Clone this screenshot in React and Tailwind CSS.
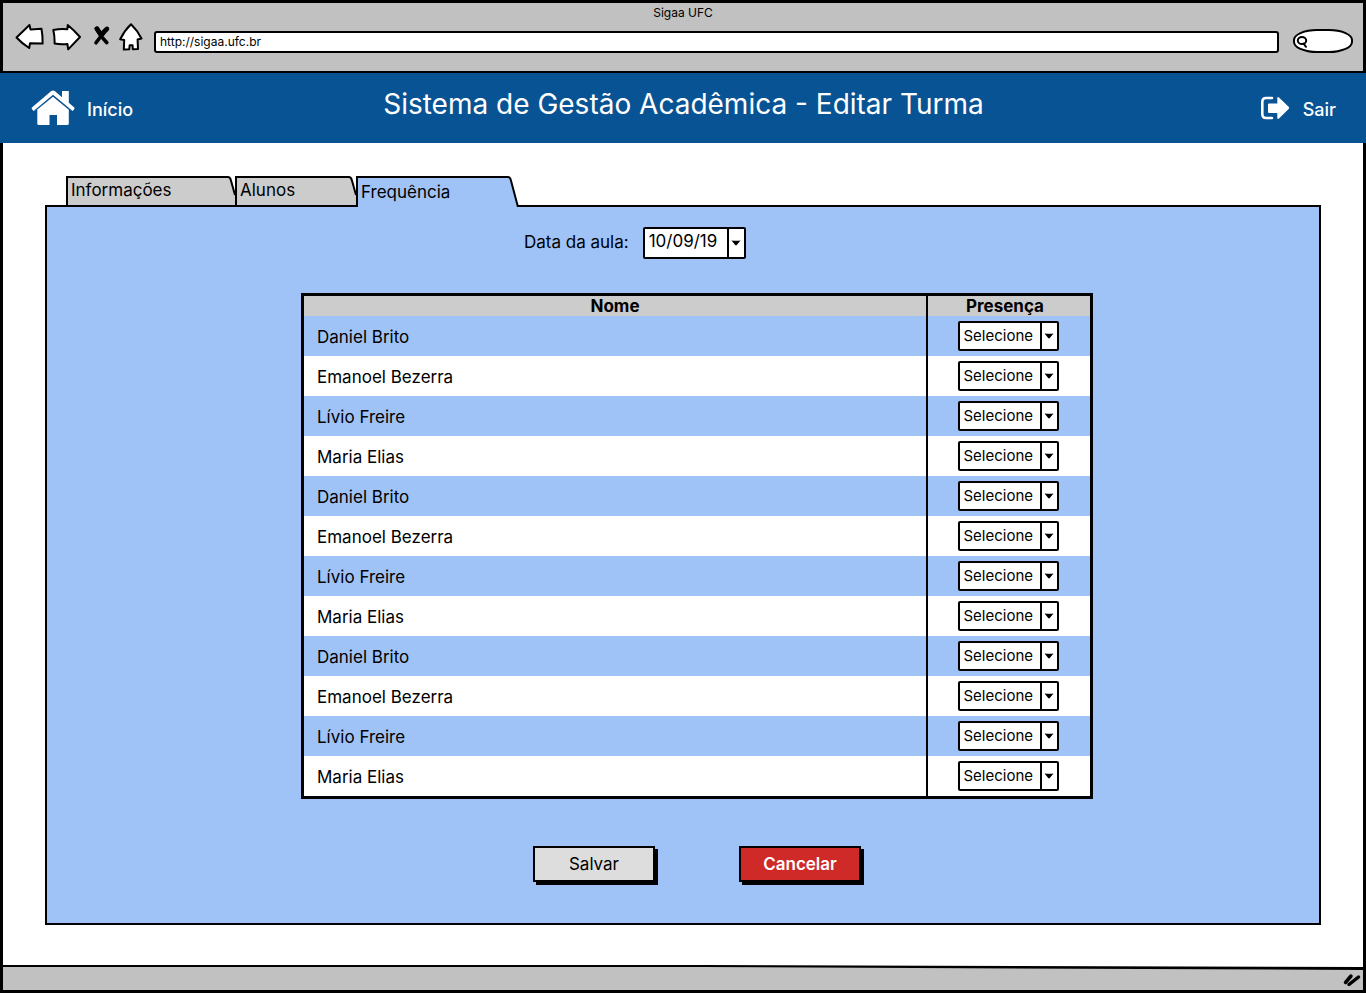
import React from "react";

const students = [
  "Daniel Brito", "Emanoel Bezerra", "Lívio Freire", "Maria Elias",
  "Daniel Brito", "Emanoel Bezerra", "Lívio Freire", "Maria Elias",
  "Daniel Brito", "Emanoel Bezerra", "Lívio Freire", "Maria Elias",
];

const sketch = { fill: "#fff", stroke: "#000", strokeWidth: 2, strokeLinejoin: "round", strokeLinecap: "round" };

function BrowserBar() {
  return (
    <div className="h-[73px] border-x-[3px] border-t-[3px] border-b-2 border-black bg-[#c1c1c1]">
      <p className="text-center text-xs leading-5">Sigaa UFC</p>
      <div className="flex h-[30px] items-end pr-[10px] pl-3">
        <div className="flex self-start">
          <button aria-label="Voltar" className="mr-2">
            <svg width="29" height="28" viewBox="0 0 29 28" {...sketch}>
              <path d="M1.5 14.5 14.5 2 15.5 6.5 26.5 5.8 Q27.8 13 27.6 20.6 L15 20.3 14.2 25 Q7 20.5 1.5 14.5Z" />
            </svg>
          </button>
          <button aria-label="Avançar" className="mr-3">
            <svg width="29" height="28" viewBox="0 0 29 28" {...sketch}>
              <path d="M1.3 7 Q8 5.4 15.4 6.2 L15.7 2 Q22.4 7.5 28 14 L16.2 26.4 15.4 21 Q8.5 21.6 2.6 20.6 Q2.8 13 1.3 7Z" />
            </svg>
          </button>
          <button aria-label="Parar" className="mr-2">
            <svg width="18" height="28" viewBox="0 0 18 28" fill="none" stroke="#000" strokeLinecap="round">
              <path d="M3.2 5.5 Q7 13 13.8 19.6M14.3 5.6 Q8.5 12 3 19.8" strokeWidth="3.6" />
              <path d="M4 5.8 Q6 9 8.2 11.8M13.8 6 Q11 8.4 9 11.5" strokeWidth="4.8" />
            </svg>
          </button>
          <button aria-label="Página inicial">
            <svg width="24" height="28" viewBox="0 0 24 28" {...sketch}>
              <path d="M12 1.3 Q18.5 7.5 22.5 15.5 L18.6 16.5 19 26 13.8 26.3 13.6 22.3 10.7 22.2 10.2 26.3 4.8 26.6 5.2 17 1.2 16.3 Q5.5 7.5 12 1.3Z" />
            </svg>
          </button>
        </div>
        <input
          aria-label="Endereço"
          defaultValue="http://sigaa.ufc.br"
          className="ml-[11px] h-[22px] min-w-0 flex-1 rounded-[3px] border-2 border-black bg-white px-1 pb-[2px] text-xs outline-none"
        />
        <label className="ml-[14px] flex h-6 w-[60px] items-center rounded-[24px/11px] border-2 border-black bg-white pl-[1px]">
          <svg width="13" height="15" viewBox="0 0 13 15" fill="none" stroke="#000" strokeWidth="2" strokeLinecap="round">
            <ellipse cx="6" cy="6.5" rx="4.2" ry="3.6" />
            <path d="M7.5 9.5 10 12.8" />
          </svg>
          <input aria-label="Pesquisar" className="w-9 min-w-0 bg-transparent text-xs outline-none" />
        </label>
      </div>
    </div>
  );
}

function Header() {
  return (
    <header className="grid h-[70px] grid-cols-[1fr_auto_1fr] items-center bg-[#085394] pr-[30px] pl-[31px] text-white">
      <a href="#inicio" className="flex items-center gap-3 text-lg font-medium">
        <svg width="44" height="36" viewBox="0 0 44 36" fill="#fff">
          <path d="M1.2 17.2 20 1.3 Q22 -.2 24 1.3 L31 7.2 V1 H37.8 V12.8 L43 17.3 Q44 18.3 43 19.5 L41.6 21 22 4.8 2.6 21 1 19.3 Q.2 18.2 1.2 17.2Z" />
          <path d="M6.3 19.6 22 6.8 37.8 19.8 V33.5 Q37.8 35 36.2 35 H26 V25 H18.5 V35 H8 Q6.3 35 6.3 33.4Z" />
        </svg>
        <span className="pt-[3px]">Início</span>
      </a>
      <h1 className="pb-2 text-[28px] leading-8">Sistema de Gestão Acadêmica - Editar Turma</h1>
      <a href="#sair" className="flex items-center gap-[13px] justify-self-end text-lg font-medium">
        <svg width="30" height="26" viewBox="0 0 30 26" fill="none" stroke="#fff" strokeWidth="2.6" strokeLinecap="round">
          <path d="M12 3 H6 Q2.3 3 2.3 7 V19 Q2.3 23 6 23 H12" />
          <path d="M9 8.5 H17.3 V3 Q17.5 1.3 19 2.6 L28.6 11.8 Q29.6 13 28.6 14 L19 23.6 Q17.5 24.5 17.3 23 V18 H9 Q8 18 8 17 V9.5 Q8 8.5 9 8.5Z" fill="#fff" stroke="none" />
        </svg>
        <span className="pt-[3px]">Sair</span>
      </a>
    </header>
  );
}

function TabEdge({ active }) {
  return active ? (
    <svg width="12" height="31" viewBox="0 0 12 31" className="shrink-0">
      <path d="M0 1 H1 Q3 1 3.8 4 L11 31 H0Z" fill="#9fc3f7" />
      <path d="M0 1 H1 Q3 1 3.8 4 L11 31" fill="none" stroke="#000" strokeWidth="2" />
    </svg>
  ) : (
    <svg width="8" height="29" viewBox="0 0 8 29" className="shrink-0">
      <path d="M0 1 H1 Q3 1 3.8 4 L8 19 V29 H0Z" fill="#ccc" />
      <path d="M0 1 H1 Q3 1 3.8 4 L8 19" fill="none" stroke="#000" strokeWidth="2" />
    </svg>
  );
}

function Tabs() {
  return (
    <div role="tablist" className="relative z-10 -mb-[2px] flex items-start pl-[21px] text-[17px] leading-6">
      <button role="tab" aria-selected="false" className="flex h-[29px] w-[169px]">
        <span className="h-full flex-1 border-t-2 border-l-2 border-black bg-[#ccc] pl-[3px] text-left">Informações</span>
        <TabEdge />
      </button>
      <button role="tab" aria-selected="false" className="flex h-[29px] w-[121px]">
        <span className="h-full flex-1 border-t-2 border-l-2 border-black bg-[#ccc] pl-[3px] text-left">Alunos</span>
        <TabEdge />
      </button>
      <button role="tab" aria-selected="true" className="flex h-[31px] w-[163px]">
        <span className="h-full flex-1 border-t-2 border-l-2 border-black bg-[#9fc3f7] pl-[3px] text-left leading-7">Frequência</span>
        <TabEdge active />
      </button>
    </div>
  );
}

function Dropdown({ id, label, options, className }) {
  return (
    <span className={"relative inline-flex rounded-[2px] border-2 border-black bg-white align-middle " + className}>
      <select id={id} aria-label={label} className="w-full appearance-none bg-transparent pr-5 pb-[2px] pl-1 outline-none">
        {options.map((o) => <option key={o}>{o}</option>)}
      </select>
      <span className="pointer-events-none absolute inset-y-0 right-0 flex w-[17px] items-center justify-center border-l-2 border-black">
        <svg width="10" height="6" viewBox="0 0 10 6"><path d="M.5 .5 Q5 1.2 9.5 .5 L5.8 5 Q5 5.8 4.2 5Z" /></svg>
      </span>
    </span>
  );
}

function Attendance() {
  return (
    <section className="flex flex-1 flex-col items-center border-2 border-black bg-[#9fc3f7] pt-5 pb-[38px] pl-7">
      <div className="w-[792px] max-w-full">
        <div className="flex items-center gap-[14px] pl-[223px] text-[17px]">
          <label htmlFor="data-aula">Data da aula:</label>
          <Dropdown id="data-aula" options={["10/09/19"]} className="h-8 w-[103px] text-[17px]" />
        </div>
        <table className="mt-[34px] w-full table-fixed border-separate border-spacing-0 border-[3px] border-black">
          <thead>
            <tr className="h-5 bg-[#ccc] text-[17px] leading-5">
              <th className="border-r-2 border-black p-0 font-bold">Nome</th>
              <th className="w-[162px] p-0 pr-2 font-bold">Presença</th>
            </tr>
          </thead>
          <tbody>
            {students.map((name, i) => (
              <tr key={i} className="h-10 even:bg-white">
                <td className="border-r-2 border-black pt-[3px] pr-0 pb-0 pl-[13px] text-[17px]">{name}</td>
                <td className="py-0 pr-[2px] pl-0 text-center leading-none">
                  <Dropdown label={"Presença de " + name} options={["Selecione", "Presente", "Ausente"]} className="h-[30px] w-[101px] text-[15px]" />
                </td>
              </tr>
            ))}
          </tbody>
        </table>
        <div className="mt-[47px] flex justify-center gap-[84px]">
          <button className="h-9 w-[122px] border-2 border-black bg-[#ddd] pt-[2px] text-[17px] shadow-[3px_3px_0_#000]">Salvar</button>
          <button className="h-9 w-[122px] border-2 border-black bg-[#cf2a27] pt-[2px] text-[17px] font-semibold text-white shadow-[3px_3px_0_#000]">Cancelar</button>
        </div>
      </div>
    </section>
  );
}

export default function App() {
  return (
    <div className="flex min-h-screen flex-col bg-white font-['Inter',sans-serif] text-black">
      <BrowserBar />
      <Header />
      <main className="flex flex-1 flex-col border-x-[3px] border-black px-[42px] pt-[33px] pb-10">
        <Tabs />
        <Attendance />
      </main>
      <footer className="h-7 border-x-[3px] border-b-[3px] border-black bg-[#c1c1c1]">
        <svg className="block h-[5px] w-full" viewBox="0 0 1360 5" preserveAspectRatio="none">
          <path d="M0 0 H1360 V3 L700 0Z" fill="#fff" />
          <path d="M0 0 H700 L1360 2 V5 L700 2 H0Z" />
        </svg>
        <svg width="18" height="14" viewBox="0 0 18 14" className="mt-[3px] mr-[2px] ml-auto block" fill="none" stroke="#000" strokeWidth="3.5" strokeLinecap="round">
          <path d="M2.5 9.5 8 3M6 11.5 15.5 4" />
        </svg>
      </footer>
    </div>
  );
}
